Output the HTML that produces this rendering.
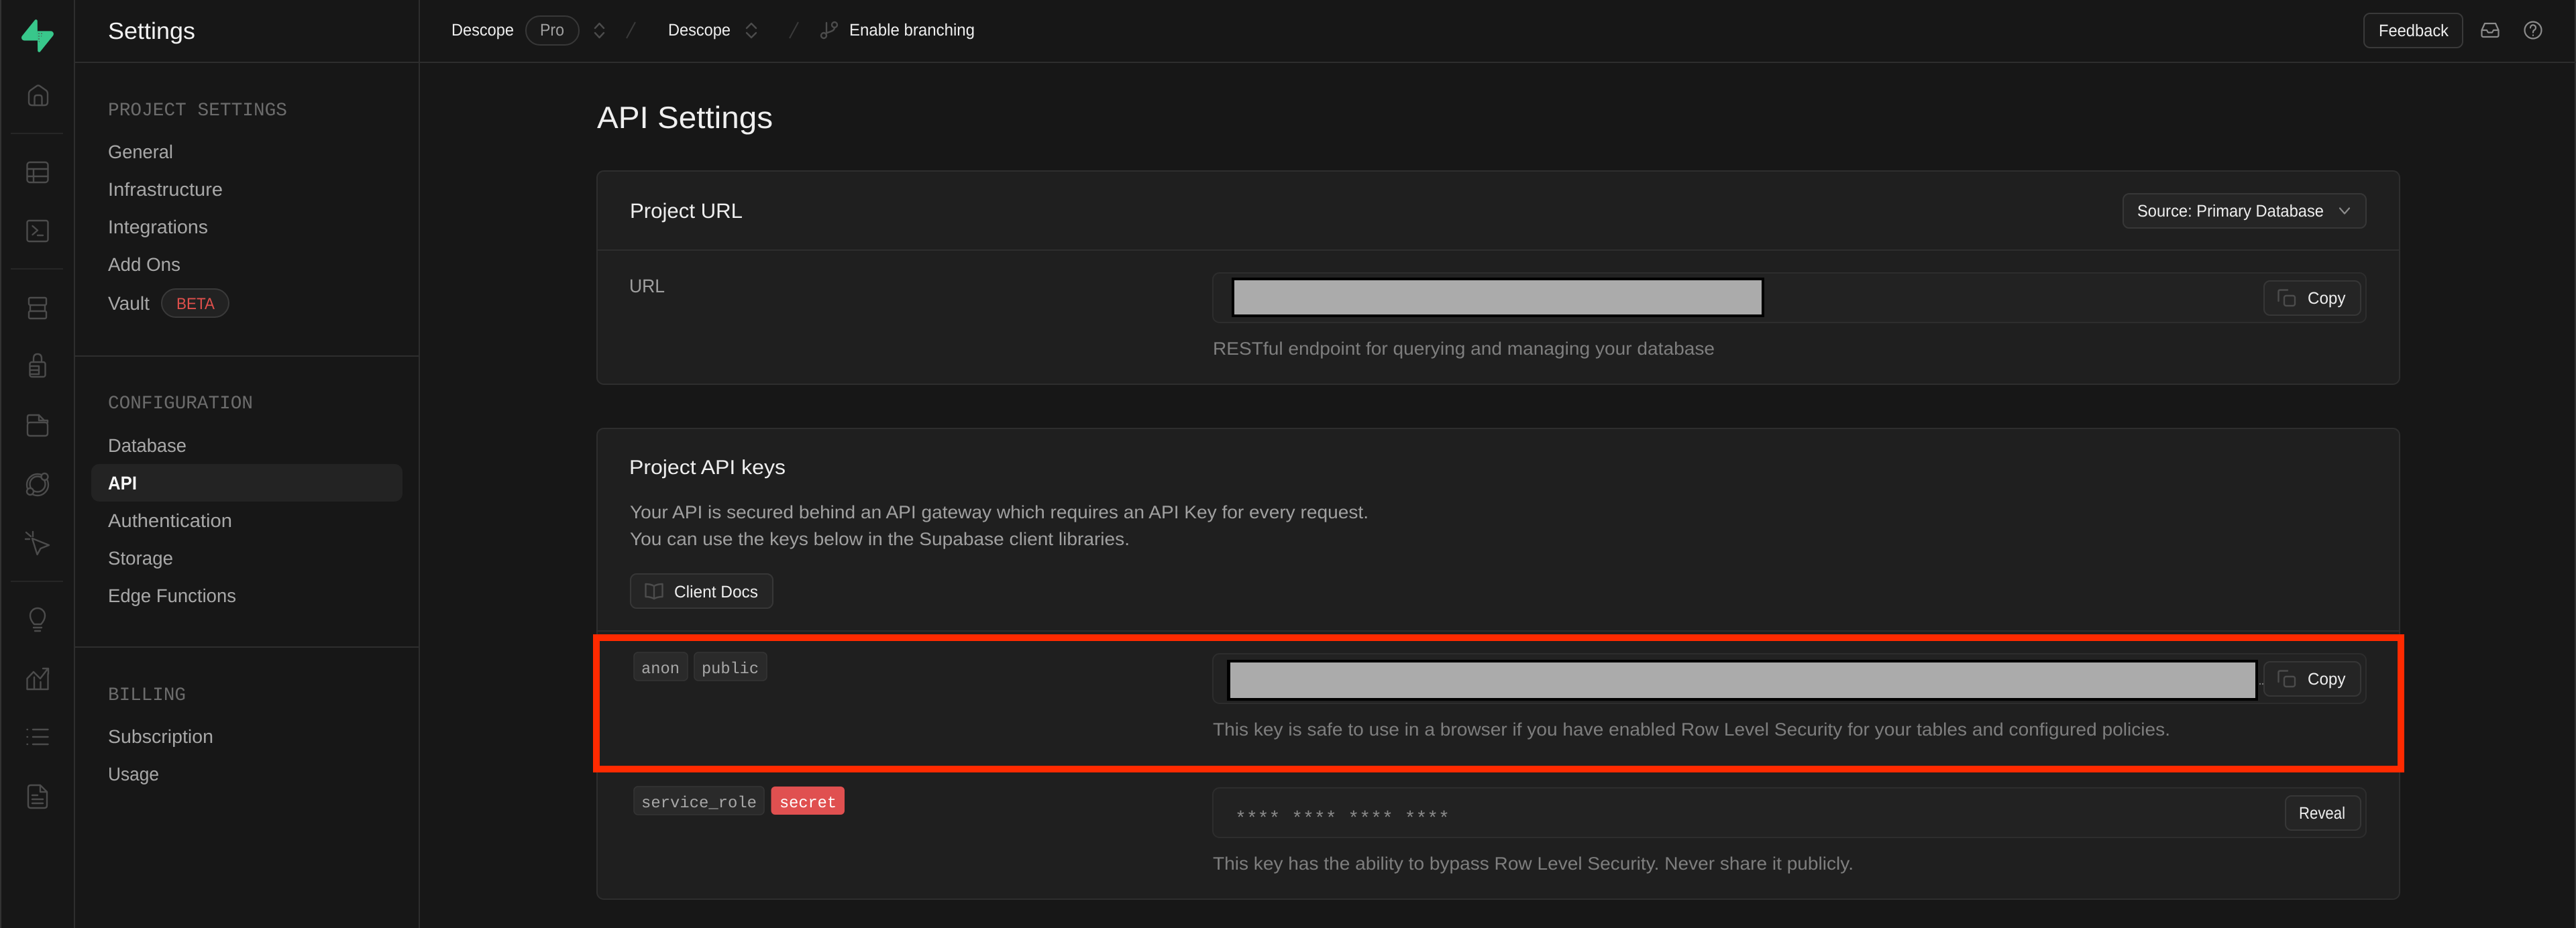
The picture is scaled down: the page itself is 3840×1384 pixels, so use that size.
<!DOCTYPE html>
<html lang="en">
<head>
<meta charset="utf-8">
<title>API Settings</title>
<style>
html,body{margin:0;padding:0;background:#171717;width:3840px;height:1384px;overflow:hidden}
svg{display:block}
text{font-family:"Liberation Sans",sans-serif;text-rendering:geometricPrecision}
.nav{font-size:28px;fill:#a8a8a8}
.mono{font-family:"Liberation Mono",monospace;font-size:28px;fill:#6c6c6c}
.tag{font-family:"Liberation Mono",monospace;font-size:24px;fill:#a8a8a8}
.hd{font-size:25px;fill:#ededed}
.btn{font-size:25px;fill:#ededed}
.desc{font-size:27px;fill:#7e7e7e}
.body{font-size:27px;fill:#a0a0a0}
.ic{fill:none;stroke:#4c4c4c;stroke-width:2.4;stroke-linecap:round;stroke-linejoin:round}
.ic2{fill:none;stroke:#8c8c8c;stroke-width:2.2;stroke-linecap:round;stroke-linejoin:round}
.b{fill:#252525;stroke:#373737;stroke-width:2}
.inp{fill:#222222;stroke:#2d2d2d;stroke-width:2}
.t{fill:#2a2a2a;stroke:#353535;stroke-width:1.5}
.card{fill:#1f1f1f;stroke:#2e2e2e;stroke-width:2}
.ln{fill:#2e2e2e}
</style>
</head>
<body>
<svg xmlns="http://www.w3.org/2000/svg" width="3840" height="1384" viewBox="0 0 3840 1384">
<defs>
<pattern id="dots" width="4" height="4" patternUnits="userSpaceOnUse"><circle cx="2" cy="2" r="1" fill="#4a6a5a"/></pattern>
</defs>
<rect width="3840" height="1384" fill="#171717"/>

<!-- frame lines -->
<rect x="0" y="0" width="2" height="1384" fill="#333"/>
<rect x="3838" y="0" width="2" height="1384" fill="#333"/>
<rect x="110" y="0" width="2" height="1384" class="ln"/>
<rect x="624" y="0" width="2" height="1384" class="ln"/>
<rect x="112" y="92" width="3728" height="2" class="ln"/>
<rect x="112" y="530" width="512" height="2" class="ln"/>
<rect x="112" y="964" width="512" height="2" class="ln"/>
<rect x="16" y="198" width="78" height="2" fill="#262626"/>
<rect x="16" y="400" width="78" height="2" fill="#262626"/>
<rect x="16" y="866" width="78" height="2" fill="#262626"/>

<!-- logo -->
<g transform="translate(32,29) scale(.44,.435)">
<path fill="#38c78b" d="M63.7076 110.284C60.8481 113.885 55.0502 111.912 54.9813 107.314L53.9738 40.0627L99.1935 40.0627C107.384 40.0627 111.952 49.5228 106.859 55.9374L63.7076 110.284Z"/>
<path fill="#38c78b" d="M45.317 2.07103C48.1765 -1.53037 53.9745 0.442937 54.0434 5.041L54.4849 72.2922H9.83113C1.64038 72.2922 -2.92775 62.8321 2.1655 56.4175L45.317 2.07103Z"/>
</g>
<path d="M56 47H65L62 54L59 63H58L56 54Z" fill="url(#dots)"/>

<!-- rail icons -->
<path class="ic" d="M43 146V140Q43 137 45 135L55 128Q57 127 59 128L69 135Q71 137 71 140V152Q71 157 66 157H48Q43 157 43 152Z"/>
<path class="ic" d="M51.500 157V146Q51.500 142 55 142H59Q62.500 142 62.500 146V157"/>
<rect class="ic" x="40.500" y="242" width="31" height="30" rx="4"/>
<path class="ic" d="M40.500 252H71.500M40.500 263H71.500M50 252V272"/>
<rect class="ic" x="40.500" y="329" width="31" height="31" rx="3"/>
<path class="ic" d="M48.500 337L56 343.500L48.500 350M56 351H64"/>
<rect class="ic" x="43" y="444" width="26" height="11" rx="2"/>
<rect class="ic" x="43" y="464" width="26" height="11" rx="2"/>
<path class="ic" d="M45 455V464M67 455V464"/>
<rect class="ic" x="44.500" y="540" width="23" height="22" rx="3"/>
<path class="ic" d="M50 540V535Q50 528 56 528Q62 528 62 535V540M46 546H58V558H46M46 552H58"/>
<path class="ic" d="M41 630V622Q41 619 44 619H58L66 627H71V630"/>
<path class="ic" d="M58 619V627H66"/>
<path class="ic" d="M41 634Q41 630 45 630H67Q71 630 71 634V646Q71 650 67 650H45Q41 650 41 646Z"/>
<circle class="ic" cx="56" cy="723" r="16"/>
<circle class="ic" cx="56" cy="722" r="11.500"/>
<circle class="ic" cx="66.500" cy="711" r="5" style="fill:#171717"/>
<circle class="ic" cx="45" cy="733" r="5" style="fill:#171717"/>
<path class="ic" d="M48 803L73 813L60.500 818L55.500 827ZM39 794L46 800M49 793V800M38 804H44"/>
<path class="ic" d="M51 931C48 928 45 923 45 918A11 11 0 0 1 67 918C67 923 64 928 61 931ZM50 936H62M52 941H60"/>
<path class="ic" d="M40.500 1028V1012L50 1002L60 1012L71.500 997M64 997H72V1005M40.500 1028H71.500M71.500 1005V1028M51 1010V1028M60.500 1017V1028"/>
<path class="ic" d="M40.500 1088H41M40.500 1099H41M40.500 1110H41M49 1088H71.500M49 1099H71.500M49 1110H71.500"/>
<path class="ic" d="M46 1171H60L70 1181V1201Q70 1205 66 1205H46Q42 1205 42 1201V1175Q42 1171 46 1171ZM60 1171V1181H70M48 1186H56M48 1192H64M48 1198H64"/>

<!-- sidebar -->
<text x="161" y="58" font-size="35" fill="#f2f2f2" textLength="130" lengthAdjust="spacingAndGlyphs">Settings</text>
<text class="mono" x="161" y="172" textLength="267" lengthAdjust="spacingAndGlyphs">PROJECT SETTINGS</text>
<text class="nav" x="161" y="236" textLength="97" lengthAdjust="spacingAndGlyphs">General</text>
<text class="nav" x="161" y="292" textLength="171" lengthAdjust="spacingAndGlyphs">Infrastructure</text>
<text class="nav" x="161" y="348" textLength="149" lengthAdjust="spacingAndGlyphs">Integrations</text>
<text class="nav" x="161" y="404" textLength="108" lengthAdjust="spacingAndGlyphs">Add Ons</text>
<text class="nav" x="161" y="462" textLength="62" lengthAdjust="spacingAndGlyphs">Vault</text>
<rect x="241" y="431" width="100" height="42" rx="21" fill="#222" stroke="#3a3a3a" stroke-width="2"/>
<text x="263" y="461" font-size="24" fill="#e0504c" textLength="57" lengthAdjust="spacingAndGlyphs">BETA</text>
<text class="mono" x="161" y="609" textLength="216" lengthAdjust="spacingAndGlyphs">CONFIGURATION</text>
<text class="nav" x="161" y="674" textLength="117" lengthAdjust="spacingAndGlyphs">Database</text>
<rect x="136" y="692" width="464" height="56" rx="12" fill="#232323"/>
<text class="nav" x="161" y="730" style="fill:#f5f5f5;font-weight:700" textLength="43" lengthAdjust="spacingAndGlyphs">API</text>
<text class="nav" x="161" y="786" textLength="185" lengthAdjust="spacingAndGlyphs">Authentication</text>
<text class="nav" x="161" y="842" textLength="97" lengthAdjust="spacingAndGlyphs">Storage</text>
<text class="nav" x="161" y="898" textLength="191" lengthAdjust="spacingAndGlyphs">Edge Functions</text>
<text class="mono" x="161" y="1044" textLength="116" lengthAdjust="spacingAndGlyphs">BILLING</text>
<text class="nav" x="161" y="1108" textLength="157" lengthAdjust="spacingAndGlyphs">Subscription</text>
<text class="nav" x="161" y="1164" textLength="76" lengthAdjust="spacingAndGlyphs">Usage</text>

<!-- header -->
<text class="hd" x="673" y="53" textLength="93" lengthAdjust="spacingAndGlyphs">Descope</text>
<rect x="784" y="24" width="79" height="43" rx="21" fill="#1a1a1a" stroke="#383838" stroke-width="2"/>
<text class="hd" x="805" y="53" style="fill:#a0a0a0" textLength="36" lengthAdjust="spacingAndGlyphs">Pro</text>
<path class="ic" d="M887 42L893.500 35L900 42M887 49L893.500 56L900 49"/>
<path d="M947 33L934 57" stroke="#3a3a3a" stroke-width="2"/>
<text class="hd" x="996" y="53" textLength="93" lengthAdjust="spacingAndGlyphs">Descope</text>
<path class="ic" d="M1113 42L1120 35L1127 42M1113 49L1120 56L1127 49"/>
<path d="M1190 33L1177 57" stroke="#3a3a3a" stroke-width="2"/>
<circle class="ic" cx="1244" cy="37" r="4"/>
<circle class="ic" cx="1228" cy="53" r="4"/>
<path class="ic" d="M1232 34V48M1244 41C1244 47 1236 47 1231 50"/>
<text class="hd" x="1266" y="53" textLength="187" lengthAdjust="spacingAndGlyphs">Enable branching</text>

<rect x="3524" y="20" width="147" height="51" rx="9" fill="#1a1a1a" stroke="#3a3a3a" stroke-width="2"/>
<text class="btn" x="3546" y="54" textLength="104" lengthAdjust="spacingAndGlyphs">Feedback</text>
<path class="ic2" d="M3699.500 45L3704 35H3720L3724.500 45V52.500Q3724.500 55 3722 55H3702Q3699.500 55 3699.500 52.500ZM3699.500 45H3707L3709 48.500H3715L3717 45H3724.500"/>
<circle class="ic2" cx="3776" cy="45" r="12.500"/>
<path class="ic2" d="M3772 41.500A4 4 0 1 1 3777.500 45Q3776 46 3776 48.500M3776 52.500V52.800"/>

<!-- title -->
<text x="890" y="191" font-size="46" fill="#f0f0f0" textLength="262" lengthAdjust="spacingAndGlyphs">API Settings</text>

<!-- card 1 -->
<rect class="card" x="890" y="255" width="2687" height="318" rx="10"/>
<text x="939" y="325" font-size="31" fill="#eeeeee" textLength="168" lengthAdjust="spacingAndGlyphs">Project URL</text>
<rect class="b" x="3165" y="289" width="362" height="51" rx="9"/>
<text class="btn" x="3186" y="323" textLength="278" lengthAdjust="spacingAndGlyphs">Source: Primary Database</text>
<path d="M3488 310.500L3495 318.500L3502 310.500" fill="none" stroke="#8c8c8c" stroke-width="2.200" stroke-linecap="round" stroke-linejoin="round"/>
<rect x="891" y="372" width="2685" height="2" class="ln"/>
<text x="938" y="436" font-size="28" fill="#a0a0a0" textLength="53" lengthAdjust="spacingAndGlyphs">URL</text>
<rect class="inp" x="1808" y="407" width="1719" height="74" rx="10"/>
<rect x="1836" y="414" width="794" height="59" fill="#000"/>
<rect x="1840" y="418" width="786" height="51" fill="#ababab"/>
<rect class="b" x="3375" y="419" width="144" height="51" rx="9"/>
<path class="ic" d="M3410 432.500H3399Q3396.500 432.500 3396.500 435V449"/>
<rect class="ic" x="3405" y="441" width="16" height="15" rx="3"/>
<text class="btn" x="3440" y="453" textLength="56.500" lengthAdjust="spacingAndGlyphs">Copy</text>
<text class="desc" x="1808" y="529" textLength="748" lengthAdjust="spacingAndGlyphs">RESTful endpoint for querying and managing your database</text>

<!-- card 2 -->
<rect class="card" x="890" y="639" width="2687" height="702" rx="10"/>
<text x="938" y="707" font-size="30" fill="#eeeeee" textLength="233" lengthAdjust="spacingAndGlyphs">Project API keys</text>
<text class="body" x="939" y="773" textLength="1101" lengthAdjust="spacingAndGlyphs">Your API is secured behind an API gateway which requires an API Key for every request.</text>
<text class="body" x="939" y="813" textLength="745" lengthAdjust="spacingAndGlyphs">You can use the keys below in the Supabase client libraries.</text>
<rect class="b" x="940" y="856" width="212" height="51" rx="9"/>
<path class="ic" d="M975 874Q970 871 962.500 871V890Q970 890 975 893Q980 890 987.500 890V871Q980 871 975 874V893"/>
<text class="btn" x="1005" y="891" textLength="125" lengthAdjust="spacingAndGlyphs">Client Docs</text>
<rect x="891" y="940" width="2685" height="2" class="ln"/>

<!-- anon row -->
<rect class="t" x="945" y="973" width="80" height="42" rx="6"/>
<text class="tag" x="956" y="1004" textLength="57" lengthAdjust="spacingAndGlyphs">anon</text>
<rect class="t" x="1035" y="973" width="108" height="42" rx="6"/>
<text class="tag" x="1046" y="1004" textLength="85" lengthAdjust="spacingAndGlyphs">public</text>
<rect class="inp" x="1808" y="975" width="1719" height="74" rx="10"/>
<rect x="1829" y="984" width="1537" height="61" fill="#000"/>
<rect x="1834" y="988" width="1528" height="53" fill="#ababab"/>
<circle cx="3369" cy="1020" r="1.200" fill="#777"/>
<circle cx="3373" cy="1020" r="1.200" fill="#777"/>
<rect class="b" x="3375" y="987" width="144" height="51" rx="9"/>
<path class="ic" d="M3410 1000.500H3399Q3396.500 1000.500 3396.500 1003V1017"/>
<rect class="ic" x="3405" y="1009" width="16" height="15" rx="3"/>
<text class="btn" x="3440" y="1021" textLength="56.500" lengthAdjust="spacingAndGlyphs">Copy</text>
<text class="desc" x="1808" y="1097" textLength="1427" lengthAdjust="spacingAndGlyphs">This key is safe to use in a browser if you have enabled Row Level Security for your tables and configured policies.</text>

<!-- service row -->
<rect class="t" x="945" y="1173" width="194" height="42" rx="6"/>
<text class="tag" x="956" y="1204" textLength="172" lengthAdjust="spacingAndGlyphs">service_role</text>
<rect x="1149.500" y="1173" width="109.500" height="42" rx="6" fill="#e05050"/>
<text class="tag" x="1162" y="1204" style="fill:#fff" textLength="85" lengthAdjust="spacingAndGlyphs">secret</text>
<rect class="inp" x="1808" y="1175" width="1719" height="74" rx="10"/>
<text x="1841" y="1229" font-size="28" fill="#8a8a8a" style="font-family:'Liberation Mono',monospace" textLength="320" lengthAdjust="spacingAndGlyphs" xml:space="preserve">**** **** **** ****</text>
<rect class="b" x="3407" y="1187" width="112" height="51" rx="9"/>
<text class="btn" x="3427" y="1221" textLength="69" lengthAdjust="spacingAndGlyphs">Reveal</text>
<text class="desc" x="1808" y="1297" textLength="955" lengthAdjust="spacingAndGlyphs">This key has the ability to bypass Row Level Security. Never share it publicly.</text>

<!-- red annotation -->
<rect x="889" y="951" width="2690" height="196" fill="none" stroke="#ff2a00" stroke-width="10"/>
</svg>
</body>
</html>
